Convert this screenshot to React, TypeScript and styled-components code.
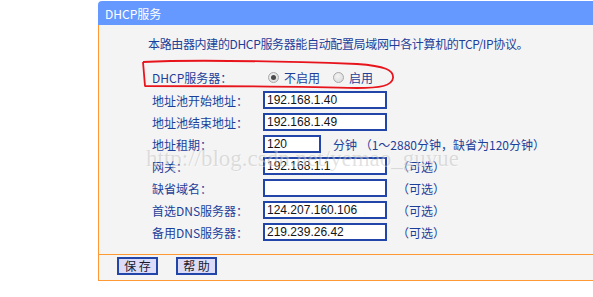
import React from "react";
import styled, { createGlobalStyle } from "styled-components";

const Global = createGlobalStyle`
  html, body { margin: 0; padding: 0; background: #ffffff; }
  body {
    width: 593px;
    height: 297px;
    overflow: hidden;
    font-family: "Noto Sans CJK SC", "Noto Sans", sans-serif;
  }
`;

const BLUE_TEXT = "#1d3f9a";
const ORANGE = "#ff9933";

const Page = styled.div`
  position: relative;
  box-sizing: border-box;
  width: 593px;
  height: 297px;
  padding: 1px 0 0 98px;
`;

const Panel = styled.div`
  width: 495px;
  display: flex;
  flex-direction: column;
`;

const Header = styled.div`
  height: 24px;
  background: #6699ff;
  border-top-left-radius: 4px;
  color: #ffffff;
  font-size: 12px;
  display: flex;
  align-items: center;
  padding-left: 7px;
`;

const Body = styled.div`
  box-sizing: border-box;
  height: 229px;
  border-left: 1px solid ${ORANGE};
  background: #f4f4f4;
  padding: 11px 0 0 49px;
`;

const Intro = styled.div`
  font-size: 12px;
  line-height: 16px;
  letter-spacing: -0.35px;
  color: ${BLUE_TEXT};
  white-space: nowrap;
`;

const Form = styled.div`
  display: grid;
  grid-template-columns: 111px 1fr;
  grid-template-rows: 23px;
  grid-auto-rows: 22px;
  margin: 14px 0 0 4px;
`;

const Label = styled.div`
  display: flex;
  align-items: center;
  font-size: 12px;
  color: ${BLUE_TEXT};
  white-space: nowrap;
`;

const Field = styled.div`
  display: flex;
  align-items: center;
  white-space: nowrap;
`;

const TextInput = styled.input<{ $w: number }>`
  box-sizing: border-box;
  width: ${(p) => p.$w}px;
  height: 18px;
  margin: 0;
  padding: 0 2px;
  border: 2px solid #2145a8;
  background: #ffffff;
  font-family: "Liberation Sans", Arial, sans-serif;
  font-size: 12px;
  color: #141414;
  outline: none;
`;

const Note = styled.span<{ $ml: number }>`
  margin-left: ${(p) => p.$ml}px;
  font-size: 12px;
  color: ${BLUE_TEXT};
`;

const RadioGroup = styled.div`
  display: flex;
  align-items: center;
  padding-left: 5px;
`;

const Radio = styled.span<{ $checked?: boolean }>`
  position: relative;
  box-sizing: border-box;
  width: 11px;
  height: 11px;
  border-radius: 50%;
  border: 1px solid #a8a8a8;
  background: radial-gradient(circle at 40% 35%, #f4f4f4 0%, #d6d6d6 100%);
  &::after {
    content: "";
    display: ${(p) => (p.$checked ? "block" : "none")};
    position: absolute;
    left: 2px;
    top: 2px;
    width: 5px;
    height: 5px;
    border-radius: 50%;
    background: #4a4a4a;
  }
`;

const RadioText = styled.span<{ $mr: number }>`
  margin: 0 ${(p) => p.$mr}px 0 5px;
  font-size: 12px;
  color: ${BLUE_TEXT};
`;

const Footer = styled.div`
  box-sizing: border-box;
  height: 27px;
  border-left: 1px solid ${ORANGE};
  border-top: 1px solid ${ORANGE};
  border-bottom: 1px solid ${ORANGE};
  background: #f4f4f4;
  display: flex;
  align-items: flex-start;
  gap: 18px;
  padding: 2px 0 0 18px;
`;

const Button = styled.button`
  box-sizing: border-box;
  width: 41px;
  height: 18px;
  margin: 0;
  padding: 0;
  border: 2px solid #2145a8;
  background: #dcdcf8;
  color: #1a1a2e;
  font-family: "Noto Sans CJK SC", sans-serif;
  font-size: 12px;
  line-height: 14px;
  white-space: pre;
`;

const Watermark = styled.div`
  position: absolute;
  left: 146px;
  top: 147px;
  font-family: "Liberation Serif", "Times New Roman", serif;
  font-size: 23px;
  line-height: 23px;
  color: rgba(150, 150, 150, 0.28);
  text-shadow: 1px 1px 0 rgba(255, 255, 255, 0.4);
  pointer-events: none;
  white-space: nowrap;
`;

const Annotation = styled.svg`
  position: absolute;
  left: 0;
  top: 0;
  pointer-events: none;
`;

type Row = { label: string; value: string; width: number; note: string; ml: number };

const rows: Row[] = [
  { label: "地址池开始地址：", value: "192.168.1.40", width: 124, note: "", ml: 0 },
  { label: "地址池结束地址：", value: "192.168.1.49", width: 124, note: "", ml: 0 },
  { label: "地址租期：", value: "120", width: 58, note: "分钟\u00a0（1～2880分钟，缺省为120分钟）", ml: 12 },
  { label: "网关：", value: "192.168.1.1", width: 124, note: "（可选）", ml: 10 },
  { label: "缺省域名：", value: "", width: 124, note: "（可选）", ml: 10 },
  { label: "首选DNS服务器：", value: "124.207.160.106", width: 124, note: "（可选）", ml: 10 },
  { label: "备用DNS服务器：", value: "219.239.26.42", width: 124, note: "（可选）", ml: 10 },
];

export default function App() {
  return (
    <Page>
      <Global />
      <Panel>
        <Header>DHCP服务</Header>
        <Body>
          <Intro>本路由器内建的DHCP服务器能自动配置局域网中各计算机的TCP/IP协议。</Intro>
          <Form>
            <Label>DHCP服务器：</Label>
            <RadioGroup>
              <Radio $checked />
              <RadioText $mr={13}>不启用</RadioText>
              <Radio />
              <RadioText $mr={0}>启用</RadioText>
            </RadioGroup>
            {rows.map((r) => (
              <React.Fragment key={r.label}>
                <Label>{r.label}</Label>
                <Field>
                  <TextInput $w={r.width} defaultValue={r.value} readOnly />
                  {r.note && <Note $ml={r.ml}>{r.note}</Note>}
                </Field>
              </React.Fragment>
            ))}
          </Form>
        </Body>
        <Footer>
          <Button>保 存</Button>
          <Button>帮 助</Button>
        </Footer>
      </Panel>
      <Watermark>http://blog.csdn.net/yemao_guyue</Watermark>
      <Annotation width="593" height="297" viewBox="0 0 593 297">
        <path
          d="M143,62 C200,59 300,62 357,64 C385,66 394,70 393,78 C392,86 380,88 357,88 C330,87 250,86 145,86 L143,62"
          fill="none"
          stroke="#e8141c"
          strokeWidth="1.8"
          strokeLinejoin="round"
        />
      </Annotation>
    </Page>
  );
}
